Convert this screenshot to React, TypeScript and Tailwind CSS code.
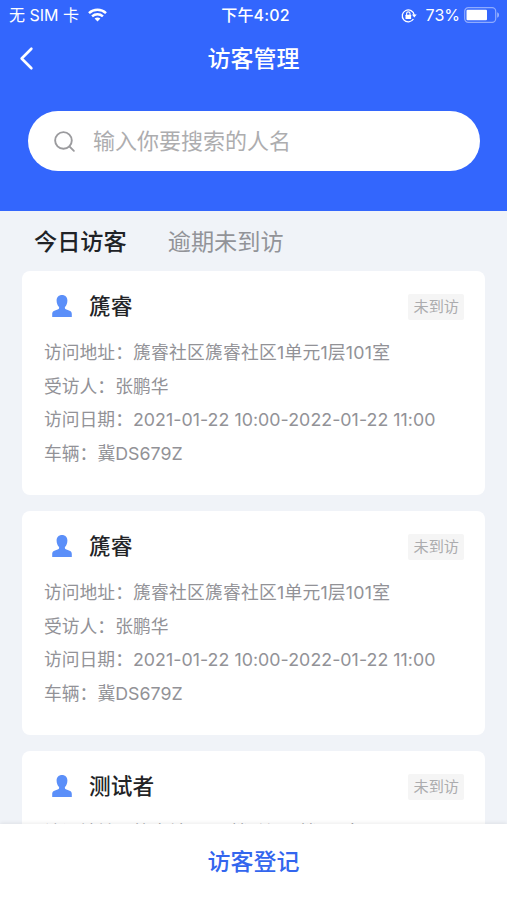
import { ChevronLeft, Search } from "lucide-react";

interface Visitor {
  id: number;
  name: string;
  status: string;
  address: string;
  host: string;
  date: string;
  plate: string;
}

const VISITORS: Visitor[] = [
  {
    id: 1,
    name: "篪睿",
    status: "未到访",
    address: "篪睿社区篪睿社区1单元1层101室",
    host: "张鹏华",
    date: "2021-01-22 10:00-2022-01-22 11:00",
    plate: "冀DS679Z",
  },
  {
    id: 2,
    name: "篪睿",
    status: "未到访",
    address: "篪睿社区篪睿社区1单元1层101室",
    host: "张鹏华",
    date: "2021-01-22 10:00-2022-01-22 11:00",
    plate: "冀DS679Z",
  },
  {
    id: 3,
    name: "测试者",
    status: "未到访",
    address: "篪睿社区1号楼1单元1楼101室",
    host: "张鹏华",
    date: "2021-01-22 10:00-2022-01-22 11:00",
    plate: "冀DS679Z",
  },
];

function StatusBar() {
  return (
    <div className="grid h-[30px] grid-cols-3 items-center pl-[9px] pr-[7px] text-[16px] leading-[30px]">
      <div className="flex items-center">
        <span className="whitespace-nowrap">无 SIM 卡</span>
        <svg className="ml-[9px]" width="19" height="14" viewBox="0 0 19 14">
          <g fill="none" stroke="white" strokeWidth="2.5">
            <path d="M1 5.2C5.7.7 13.3.7 18 5.2" />
            <path d="M4.1 8.4c3-2.8 7.8-2.8 10.8 0" />
          </g>
          <path d="M6.6 10.6c1.7-1.5 4.1-1.5 5.8 0L9.5 13.6z" fill="white" />
        </svg>
      </div>
      <span className="whitespace-nowrap pl-[2px] text-center font-medium tracking-[0.15px]">
        下午4:02
      </span>
      <div className="flex items-center justify-end">
        <svg width="16" height="15" viewBox="0 0 16 15" fill="none">
          <path
            d="M12.4 11A6 6 0 1 1 13.2 7"
            stroke="white"
            strokeWidth="1.3"
          />
          <path d="M10.9 6.6h4.8l-2.4 2.9z" fill="white" />
          <rect x="4.5" y="6.7" width="5.6" height="4.2" rx=".5" fill="white" />
          <path
            d="M5.6 7V5.6a1.7 1.7 0 0 1 3.4 0V7"
            stroke="white"
            strokeWidth="1.1"
          />
        </svg>
        <span className="ml-[9px]">73%</span>
        <svg className="ml-[4px]" width="36" height="16" viewBox="0 0 36 16">
          <rect
            x=".7"
            y=".7"
            width="31"
            height="14.6"
            rx="3.6"
            fill="none"
            stroke="white"
            strokeOpacity=".45"
            strokeWidth="1.2"
          />
          <rect x="2.5" y="2.7" width="20.5" height="10.6" rx="1" fill="white" />
          <path d="M33.2 5.3c2.4.6 2.4 4.8 0 5.4z" fill="white" opacity=".5" />
        </svg>
      </div>
    </div>
  );
}

function UserIcon() {
  return (
    <svg width="20" height="22" viewBox="0 0 20 22" fill="#5b8ff9">
      <path d="M10 0c3.2 0 5.4 2.2 5.4 5.5 0 2.9-1 5.2-2.5 6.6v1c0 .6.3 1 .9 1.2l3.8 1.5c1.600.7 2.200 1.700 2.200 3.200V22H.2v-3c0-1.500.6-2.500 2.200-3.200l3.800-1.500c.6-.2.9-.6.9-1.200v-1C5.600 10.700 4.600 8.400 4.600 5.500 4.600 2.200 6.800 0 10 0z" />
    </svg>
  );
}

function VisitorCard({ visitor }: { visitor: Visitor }) {
  const rows = [
    ["受访人", visitor.host],
    ["访问日期", visitor.date],
    ["车辆", visitor.plate],
  ];

  return (
    <div className="h-[224px] shrink-0 rounded-[8px] bg-white px-[22px] pt-[19px]">
      <div className="flex h-[32px] items-center">
        <div className="ml-[8px]">
          <UserIcon />
        </div>
        <h3 className="ml-[17px] text-[21.7px] font-medium text-[#222326]">
          {visitor.name}
        </h3>
        <span className="-mr-px ml-auto mt-[2px] h-[26px] rounded-[2px] bg-[#f5f5f5] px-[5px] text-[15.2px] leading-[26px] text-[#acacae]">
          {visitor.status}
        </span>
      </div>
      <div className="mt-[14px] whitespace-nowrap text-[17.8px] leading-[33.7px] text-[#929297]">
        <p>
          访问地址：
          <span className="tracking-[0.22px]">{visitor.address}</span>
        </p>
        {rows.map(([label, value]) => (
          <p key={label}>
            {label}：<span className="tracking-[0.04px]">{value}</span>
          </p>
        ))}
      </div>
    </div>
  );
}

export default function App() {
  return (
    <div
      lang="zh-CN"
      className="flex h-[900px] w-full flex-col overflow-hidden bg-[#f0f3f8] font-['Inter','Noto_Sans_CJK_SC',sans-serif]"
    >
      <header className="h-[211px] shrink-0 bg-[#3366fd] text-white">
        <StatusBar />
        <div className="grid h-[56px] grid-cols-[1fr_auto_1fr] items-center">
          {/* taller and thinner than the stock chevron proportions */}
          <ChevronLeft
            className="ml-[7px]"
            width={39}
            height={45}
            strokeWidth={1.6}
          />
          <h1 className="pt-[2px] text-[23px] font-medium">访客管理</h1>
        </div>
        <div className="ml-[28px] mr-[27px] mt-[25px] flex h-[60px] items-center rounded-full bg-white pl-[24px]">
          <Search size={25} strokeWidth={1.8} color="#9b9b9e" />
          <span className="ml-[16px] pt-px text-[22px] text-[#adadaf]">
            输入你要搜索的人名
          </span>
        </div>
      </header>

      <nav className="flex h-[60px] shrink-0 items-center gap-[41px] pl-[34px] pt-[2px] text-[23.2px]">
        <span className="font-medium text-[#202226]">今日访客</span>
        <span className="text-[#929398]">逾期未到访</span>
      </nav>

      <main className="flex min-h-0 flex-1 flex-col gap-[16px] overflow-hidden px-[22px]">
        {VISITORS.map((visitor) => (
          <VisitorCard key={visitor.id} visitor={visitor} />
        ))}
      </main>

      <footer className="z-10 flex h-[76px] shrink-0 items-center justify-center bg-white pt-px text-[23px] font-medium text-[#3366ee] shadow-[0_-1px_4px_rgba(0,0,0,0.08)]">
        访客登记
      </footer>
    </div>
  );
}
